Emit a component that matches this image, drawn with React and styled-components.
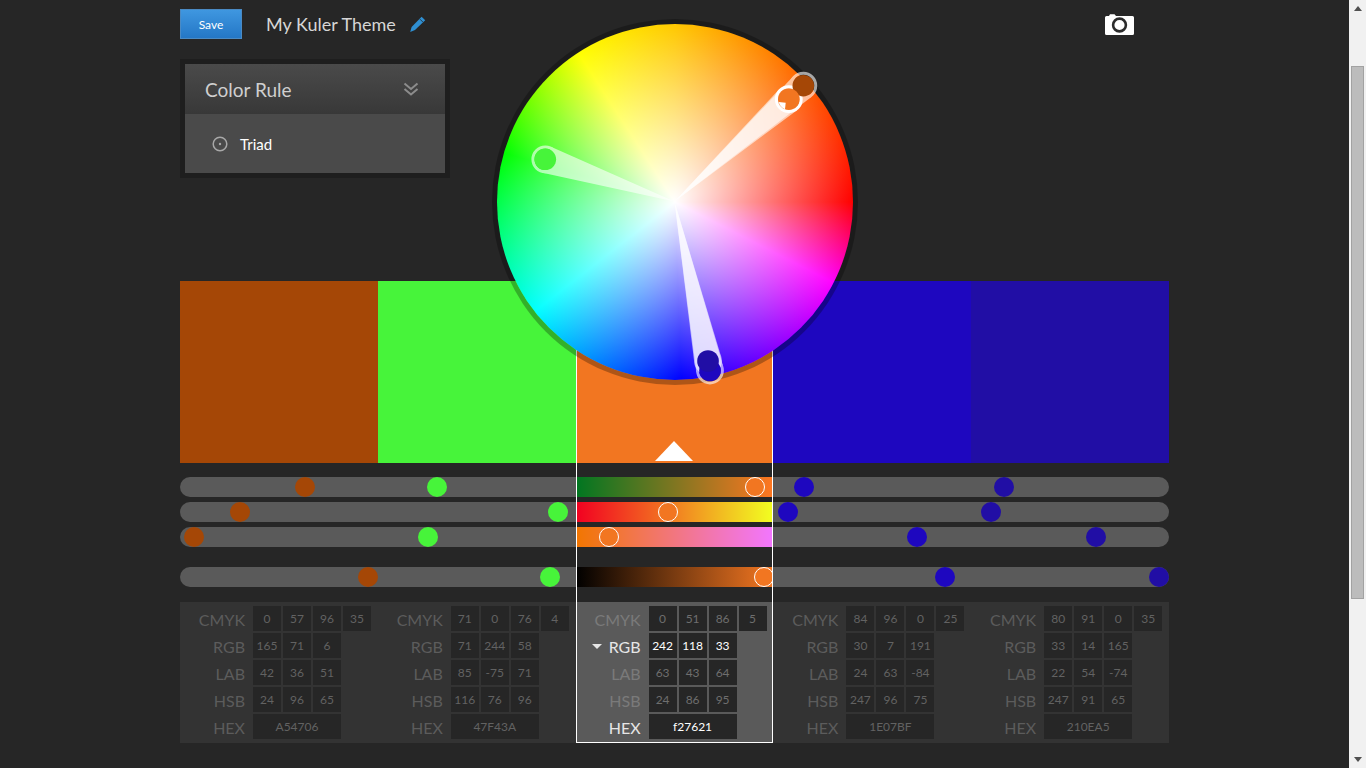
import React from 'react';
import styled, { createGlobalStyle } from 'styled-components';

const COLORS = [
  { hex: 'A54706', cmyk: [0, 57, 96, 35], rgb: [165, 71, 6], lab: [42, 36, 51], hsb: [24, 96, 65], level: 100 },
  { hex: '47F43A', cmyk: [71, 0, 76, 4], rgb: [71, 244, 58], lab: [85, -75, 71], hsb: [116, 76, 96], level: 91 },
  { hex: 'f27621', cmyk: [0, 51, 86, 5], rgb: [242, 118, 33], lab: [63, 43, 64], hsb: [24, 86, 95], level: 100, active: true },
  { hex: '1E07BF', cmyk: [84, 96, 0, 25], rgb: [30, 7, 191], lab: [24, 63, -84], hsb: [247, 96, 75], level: 91 },
  { hex: '210EA5', cmyk: [80, 91, 0, 35], rgb: [33, 14, 165], lab: [22, 54, -74], hsb: [247, 91, 65], level: 100 },
];

const RANGES = [
  'linear-gradient(90deg, rgb(0,118,33), rgb(255,118,33))',
  'linear-gradient(90deg, rgb(242,0,33), rgb(242,255,33))',
  'linear-gradient(90deg, rgb(242,118,0), rgb(242,118,255))',
  'linear-gradient(90deg, #000, #f27621)',
];

const WHEEL_CENTER = [674.5, 201.5];

// handle positions on the wheel, in page coordinates
const HANDLES = [
  { x: 803.3, y: 85.7, fill: '#a54706' },
  { x: 545.3, y: 159.3, fill: '#47f43a' },
  { x: 710, y: 370.5, fill: '#1e07bf' },
  { x: 708, y: 361, fill: '#210ea5' },
  { x: 788.8, y: 99.2, fill: '#f27621', active: true },
];

const wedgePoints = ({ x, y }) => {
  const [cx, cy] = WHEEL_CENTER;
  const r = 13.8;
  const dist = Math.hypot(cx - x, cy - y);
  const angle = Math.atan2(cy - y, cx - x);
  const spread = Math.acos(r / dist);
  const a = [x + r * Math.cos(angle + spread), y + r * Math.sin(angle + spread)];
  const b = [x + r * Math.cos(angle - spread), y + r * Math.sin(angle - spread)];
  return `${cx},${cy} ${a.join(',')} ${b.join(',')}`;
};

const dotPos = (value, max) => 10 + (value / max) * 178;

const GlobalStyle = createGlobalStyle`
  html, body {
    margin: 0;
    height: 768px;
    overflow: hidden;
    background: #262626;
  }
  * {
    box-sizing: border-box;
  }
`;

const Window = styled.div`
  display: flex;
  height: 768px;
  font-family: Lato, "Open Sans", sans-serif;
`;

const Page = styled.div`
  position: relative;
  flex: 1;
  padding: 9px 0 0 180px;
  overflow: hidden;
`;

const Content = styled.div`
  width: 989px;
`;

const TopBar = styled.div`
  display: flex;
  align-items: center;
  height: 30px;
`;

const SaveButton = styled.button`
  width: 62px;
  height: 30px;
  padding: 0;
  border: 1px solid #4a8ac4;
  background: linear-gradient(180deg, #3f97e0, #2477c6);
  color: #fff;
  font-family: inherit;
  font-size: 12px;
`;

const ThemeName = styled.div`
  margin-left: 24px;
  color: #d6d6d6;
  font-size: 18px;
  line-height: 34px;
`;

const EditIcon = styled.svg`
  margin-left: 13px;
  width: 17px;
  height: 17px;
`;

const CameraIcon = styled.svg`
  margin-left: auto;
  margin-right: 35px;
  width: 29px;
  height: 21px;
`;

const RulePanel = styled.div`
  width: 270px;
  margin-top: 20px;
  padding: 5px;
  background: #1e1e1e;
`;

const RuleHeader = styled.div`
  display: flex;
  align-items: center;
  justify-content: space-between;
  height: 50px;
  padding: 0 26px 0 20px;
  background: linear-gradient(180deg, #4a4a4a, #383838);
  color: #cfcfcf;
  font-size: 19px;
`;

const RuleBody = styled.div`
  display: flex;
  align-items: center;
  gap: 12px;
  height: 59px;
  padding: 0 0 0 27px;
  background: #4a4a4a;
  color: #fff;
  font-size: 15px;
`;

const Columns = styled.div`
  display: grid;
  grid-template-columns: repeat(5, 1fr);
  margin-top: 103px;
`;

const Column = styled.div`
  position: relative;

  ${(p) =>
    p.$active &&
    `
    &::after {
      content: '';
      position: absolute;
      inset: 0;
      border: 1px solid #fff;
      border-top: none;
      pointer-events: none;
    }
  `}
`;

const Swatch = styled.div`
  display: flex;
  align-items: flex-end;
  justify-content: center;
  height: 182px;
  padding-bottom: 2px;
  background: ${(p) => p.$color};
`;

const Pointer = styled.div`
  width: 0;
  height: 0;
  border-left: 19px solid transparent;
  border-right: 19px solid transparent;
  border-bottom: 20px solid #fff;
`;

const Sliders = styled.div`
  display: flex;
  flex-direction: column;
  gap: 5px;
  margin-top: 14px;
`;

const Track = styled.div`
  position: relative;
  height: 20px;
  background: ${(p) => p.$range || '#5a5a5a'};
  border-radius: ${(p) => (p.$first ? '10px 0 0 10px' : p.$last ? '0 10px 10px 0' : '0')};

  &:last-child {
    margin-top: 15px;
  }
`;

const Dot = styled.div`
  position: absolute;
  top: 0;
  left: ${(p) => p.$left - 10}px;
  width: 20px;
  height: 20px;
  border-radius: 50%;
  background: ${(p) => p.$color};
  border: ${(p) => (p.$active ? '1px solid #fff' : 'none')};
`;

const Values = styled.div`
  display: flex;
  flex-direction: column;
  gap: 2px;
  height: 141px;
  margin-top: 15px;
  padding-top: 4px;
  background: ${(p) => (p.$active ? '#5a5a5a' : '#333')};
`;

const ValueRow = styled.div`
  display: flex;
  gap: 2px;
  height: 25px;
`;

const Label = styled.div`
  display: flex;
  align-items: center;
  justify-content: flex-end;
  gap: 7px;
  width: 65px;
  margin-right: 6px;
  padding-top: 1px;
  font-size: 16px;
  color: ${(p) => (p.$bright ? '#e6e6e6' : p.$onActive ? '#7a7a7a' : '#5c5c5c')};
`;

const Cell = styled.div`
  display: flex;
  align-items: center;
  justify-content: center;
  width: ${(p) => (p.$wide ? '88px' : '28px')};
  background: #262626;
  font-size: 12px;
  color: ${(p) => (p.$bright ? '#fff' : p.$onActive ? '#6e6e6e' : '#626262')};
`;

const Caret = styled.span`
  width: 0;
  height: 0;
  border-left: 5px solid transparent;
  border-right: 5px solid transparent;
  border-top: 5px solid #e6e6e6;
`;

const WheelDisc = styled.div`
  position: absolute;
  left: 496.5px;
  top: 23.5px;
  width: 356px;
  height: 356px;
  border-radius: 50%;
  box-shadow: 0 0 0 5px rgba(0, 0, 0, 0.28);
  background:
    radial-gradient(closest-side, #fff 0%, rgba(255, 255, 255, 0) 100%),
    conic-gradient(
      #ffc800 0deg,
      #ff8000 33deg,
      #ff0000 90deg,
      #ff00ff 117deg,
      #0000ff 178deg,
      #00ffff 232deg,
      #00ff00 286deg,
      #ffff00 327deg,
      #ffc800 360deg
    );
`;

const WheelMarks = styled.svg`
  position: absolute;
  left: 480px;
  top: 10px;
  width: 390px;
  height: 390px;
`;

const ScrollTrack = styled.div`
  display: flex;
  flex-direction: column;
  align-items: center;
  width: 17px;
  height: 768px;
  padding-top: 6px;
  background: #f1f1f1;
`;

const ScrollUp = styled.div`
  width: 0;
  height: 0;
  border-left: 4px solid transparent;
  border-right: 4px solid transparent;
  border-bottom: 5px solid #505050;
`;

const ScrollThumb = styled.div`
  width: 13px;
  height: 533px;
  margin-top: 55px;
  background: #bcbcbc;
  border: 1px solid #a2a2a2;
`;

const ScrollDown = styled.div`
  width: 0;
  height: 0;
  margin-top: auto;
  margin-bottom: 6px;
  border-left: 4px solid transparent;
  border-right: 4px solid transparent;
  border-top: 5px solid #505050;
`;

const ChevronsIcon = () => (
  <svg width="16" height="14" viewBox="0 0 16 14" fill="none" stroke="#8c8c8c" strokeWidth="2">
    <path d="M1.5 1.5 L8 7 L14.5 1.5" />
    <path d="M1.5 7 L8 12.5 L14.5 7" />
  </svg>
);

const RadioIcon = () => (
  <svg width="16" height="16" viewBox="0 0 16 16">
    <circle cx="8" cy="8" r="6.8" fill="none" stroke="#a8a8a8" strokeWidth="1.5" />
    <circle cx="8" cy="8" r="1.2" fill="#a8a8a8" />
  </svg>
);

const Wheel = () => (
  <>
    <WheelDisc />
    <WheelMarks viewBox="480 10 390 390">
      {HANDLES.map((h) => (
        <g key={h.fill} opacity={h.active ? 1 : 0.6}>
          <polygon points={wedgePoints(h)} fill="#fff" opacity={h.active ? 0.6 : 1} />
          <circle cx={h.x} cy={h.y} r="12.4" fill="none" stroke="#fff" strokeWidth="3" />
        </g>
      ))}
      {HANDLES.map((h) => (
        <circle key={h.fill} cx={h.x} cy={h.y} r="10.8" fill={h.fill} />
      ))}
      <path d="M785.7 102.7 L778.6 102 A10.8 10.8 0 0 0 785 109.3 Z" fill="#fff" />
    </WheelMarks>
  </>
);

const ValueLine = ({ name, values, color, bright, caret }) => (
  <ValueRow>
    <Label $onActive={color.active} $bright={color.active && bright}>
      {caret && color.active && <Caret />}
      {name}
    </Label>
    {values.map((v, i) => (
      <Cell key={i} $onActive={color.active} $bright={color.active && bright} $wide={name === 'HEX'}>
        {v}
      </Cell>
    ))}
  </ValueRow>
);

export default function App() {
  return (
    <Window>
      <GlobalStyle />
      <Page>
        <Content>
          <TopBar>
            <SaveButton>Save</SaveButton>
            <ThemeName>My Kuler Theme</ThemeName>
            <EditIcon viewBox="0 0 17 17">
              <path d="M12.6 0.8 L16.2 4.2 L6 14 L1.2 16 L2.6 11 Z" fill="#2f8fd2" />
              <path d="M11 3.2 L14 6.2" stroke="#262626" strokeWidth="0.8" />
            </EditIcon>
            <CameraIcon viewBox="0 0 29 21">
              <path
                d="M1.5 2 H4 L5 0.3 H9.5 L11 2 H27.5 Q29 2 29 3.5 V19.5 Q29 21 27.5 21 H1.5 Q0 21 0 19.5 V3.5 Q0 2 1.5 2 Z"
                fill="#fff"
              />
              <circle cx="14.5" cy="11" r="6.4" fill="none" stroke="#2b2b2b" strokeWidth="2.6" />
            </CameraIcon>
          </TopBar>

          <RulePanel>
            <RuleHeader>
              Color Rule
              <ChevronsIcon />
            </RuleHeader>
            <RuleBody>
              <RadioIcon />
              Triad
            </RuleBody>
          </RulePanel>

          <Columns>
            {COLORS.map((color, index) => {
              const levels = [...color.rgb.map((v) => dotPos(v, 255)), dotPos(color.level, 100)];
              return (
                <Column key={color.hex} $active={color.active}>
                  <Swatch $color={`#${color.hex}`}>{color.active && <Pointer />}</Swatch>
                  <Sliders>
                    {levels.map((left, i) => (
                      <Track
                        key={i}
                        $first={index === 0}
                        $last={index === COLORS.length - 1}
                        $range={color.active ? RANGES[i] : null}
                      >
                        <Dot $left={left} $color={`#${color.hex}`} $active={color.active} />
                      </Track>
                    ))}
                  </Sliders>
                  <Values $active={color.active}>
                    <ValueLine name="CMYK" values={color.cmyk} color={color} />
                    <ValueLine name="RGB" values={color.rgb} color={color} bright caret />
                    <ValueLine name="LAB" values={color.lab} color={color} />
                    <ValueLine name="HSB" values={color.hsb} color={color} />
                    <ValueLine name="HEX" values={[color.hex]} color={color} bright />
                  </Values>
                </Column>
              );
            })}
          </Columns>
        </Content>
        <Wheel />
      </Page>
      <ScrollTrack>
        <ScrollUp />
        <ScrollThumb />
        <ScrollDown />
      </ScrollTrack>
    </Window>
  );
}
